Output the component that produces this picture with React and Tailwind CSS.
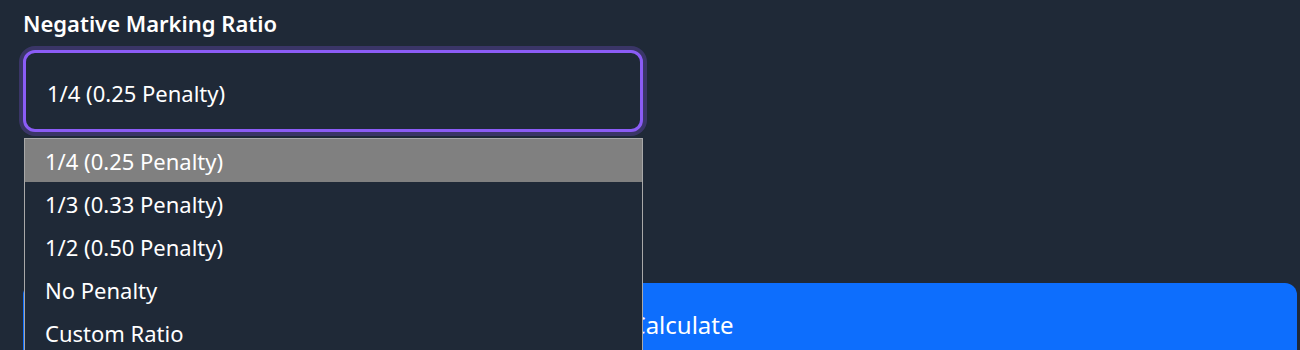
import React from 'react';

const options = [
  '1/4 (0.25 Penalty)',
  '1/3 (0.33 Penalty)',
  '1/2 (0.50 Penalty)',
  'No Penalty',
  'Custom Ratio',
];

const App = () => {
  return (
    <div className="w-[1300px] h-[350px] overflow-hidden bg-[#1f2937] font-['Noto_Sans',sans-serif] text-white">
      <div className="pl-[23px] pr-[3px] pt-[8px]">
        <label className="block text-[22px] font-semibold leading-[30px]">Negative Marking Ratio</label>

        <div className="relative mt-[12px] w-[620px]">
          <div className="h-[82px] flex items-center rounded-[12px] border-[3px] border-[#8b5cf6] bg-[#1f2937] pl-[21px] pt-[4px] text-[22px] ring-4 ring-[#8b5cf6]/25">
            1/4 (0.25 Penalty)
          </div>

          {/* open dropdown list */}
          <ul className="absolute left-[1px] top-[88px] z-10 w-[619px] border border-[#a8a8a8] bg-[#1f2937]">
            {options.map((opt, index) => (
              <li
                key={index}
                className={`h-[43px] flex items-center pl-[20px] pt-[2px] text-[22px] ${index === 0 ? 'bg-[#808080]' : ''}`}
              >
                {opt}
              </li>
            ))}
          </ul>
        </div>

        <button className="mt-[151px] w-full h-[90px] rounded-[12px] bg-[#0d6efd] flex justify-center pt-[24px] text-[24px] pl-[44px]">
          Calculate
        </button>
      </div>
    </div>
  );
};

export default App;
